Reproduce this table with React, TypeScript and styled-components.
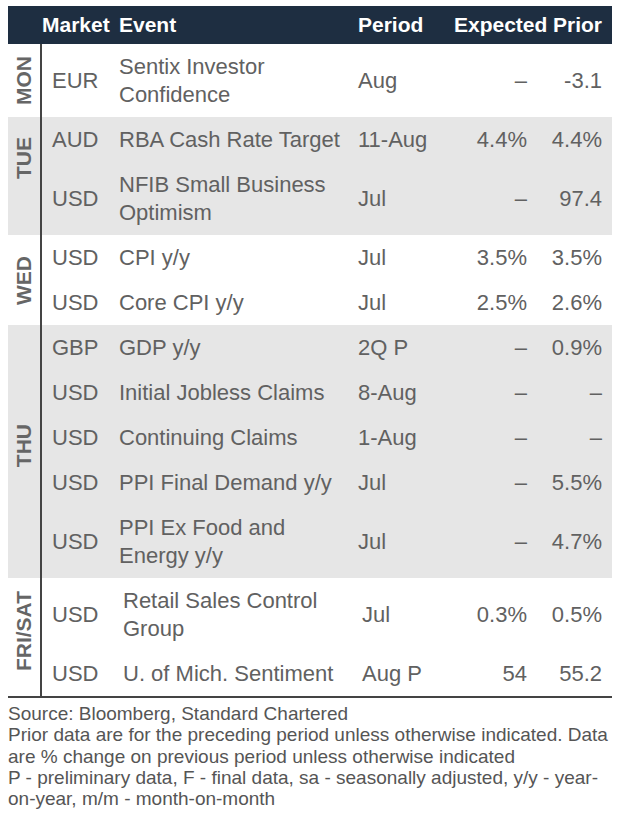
import styled, { createGlobalStyle } from "styled-components";

const GlobalStyle = createGlobalStyle`
  body {
    margin: 0;
    padding: 6px 8px;
    background: #ffffff;
    font-family: "Liberation Sans", Arial, sans-serif;
  }
`;

const Wrapper = styled.div`
  width: 604px;
`;

const Table = styled.div`
  border-bottom: 2px solid #444444;
`;

const HeaderRow = styled.div`
  display: grid;
  grid-template-columns: 34px 77px 239px 96px 83px 1fr;
  align-items: center;
  height: 38px;
  background: #1e2e41;
  color: #ffffff;
  font-size: 21px;
  font-weight: bold;
`;

const HeadCell = styled.div<{ $right?: boolean }>`
  text-align: ${(p) => (p.$right ? "right" : "left")};
  white-space: nowrap;
  &:last-child {
    padding-right: 10px;
  }
`;

const Group = styled.div<{ $shade?: boolean }>`
  display: flex;
  background: ${(p) => (p.$shade ? "#e6e6e6" : "#ffffff")};
`;

const DayCell = styled.div`
  flex: none;
  width: 32px;
  display: flex;
  align-items: center;
  justify-content: center;
  border-right: 2px solid #444444;
`;

const DayLabel = styled.span<{ $lift?: number }>`
  writing-mode: vertical-rl;
  transform: rotate(180deg);
  margin-bottom: ${(p) => p.$lift || 0}px;
  font-size: 21px;
  font-weight: bold;
  color: #666666;
  white-space: nowrap;
`;

const Rows = styled.div`
  flex: 1;
`;

const Row = styled.div`
  display: grid;
  grid-template-columns: 77px 239px 86px 83px 75px;
  align-items: center;
  padding: 8.5px 10px 8.5px 0;
  font-size: 22px;
  line-height: 28px;
  color: #616161;
`;

const Cell = styled.div<{ $right?: boolean; $inset?: number }>`
  text-align: ${(p) => (p.$right ? "right" : "left")};
  padding-left: ${(p) => p.$inset || 0}px;
  white-space: nowrap;
`;

const MarketCell = styled(Cell)`
  padding-left: 10px;
`;

const Footer = styled.div`
  padding-top: 5px;
  font-size: 19px;
  line-height: 21.3px;
  color: #555555;
`;

const FootLine = styled.div`
  white-space: nowrap;
`;

type Item = {
  market: string;
  event: string[];
  period: string;
  expected: string;
  prior: string;
};

type Day = {
  day: string;
  shade: boolean;
  lift?: number;
  inset?: number;
  items: Item[];
};

const D = "–";

const days: Day[] = [
  {
    day: "MON",
    shade: false,
    items: [
      { market: "EUR", event: ["Sentix Investor", "Confidence"], period: "Aug", expected: D, prior: "-3.1" },
    ],
  },
  {
    day: "TUE",
    shade: true,
    lift: 36,
    items: [
      { market: "AUD", event: ["RBA Cash Rate Target"], period: "11-Aug", expected: "4.4%", prior: "4.4%" },
      { market: "USD", event: ["NFIB Small Business", "Optimism"], period: "Jul", expected: D, prior: "97.4" },
    ],
  },
  {
    day: "WED",
    shade: false,
    items: [
      { market: "USD", event: ["CPI y/y"], period: "Jul", expected: "3.5%", prior: "3.5%" },
      { market: "USD", event: ["Core CPI y/y"], period: "Jul", expected: "2.5%", prior: "2.6%" },
    ],
  },
  {
    day: "THU",
    shade: true,
    lift: 12,
    items: [
      { market: "GBP", event: ["GDP y/y"], period: "2Q P", expected: D, prior: "0.9%" },
      { market: "USD", event: ["Initial Jobless Claims"], period: "8-Aug", expected: D, prior: D },
      { market: "USD", event: ["Continuing Claims"], period: "1-Aug", expected: D, prior: D },
      { market: "USD", event: ["PPI Final Demand y/y"], period: "Jul", expected: D, prior: "5.5%" },
      { market: "USD", event: ["PPI Ex Food and", "Energy y/y"], period: "Jul", expected: D, prior: "4.7%" },
    ],
  },
  {
    day: "FRI/SAT",
    shade: false,
    lift: 12,
    inset: 4,
    items: [
      { market: "USD", event: ["Retail Sales Control", "Group"], period: "Jul", expected: "0.3%", prior: "0.5%" },
      { market: "USD", event: ["U. of Mich. Sentiment"], period: "Aug P", expected: "54", prior: "55.2" },
    ],
  },
];

export default function App() {
  return (
    <Wrapper>
      <GlobalStyle />
      <Table>
        <HeaderRow>
          <span />
          <HeadCell>Market</HeadCell>
          <HeadCell>Event</HeadCell>
          <HeadCell>Period</HeadCell>
          <HeadCell $right>Expected</HeadCell>
          <HeadCell $right>Prior</HeadCell>
        </HeaderRow>
        {days.map((d) => (
          <Group key={d.day} $shade={d.shade}>
            <DayCell>
              <DayLabel $lift={d.lift}>{d.day}</DayLabel>
            </DayCell>
            <Rows>
              {d.items.map((it, i) => (
                <Row key={i}>
                  <MarketCell>{it.market}</MarketCell>
                  <Cell $inset={d.inset}>
                    {it.event.map((line) => (
                      <div key={line}>{line}</div>
                    ))}
                  </Cell>
                  <Cell $inset={d.inset}>{it.period}</Cell>
                  <Cell $right>{it.expected}</Cell>
                  <Cell $right>{it.prior}</Cell>
                </Row>
              ))}
            </Rows>
          </Group>
        ))}
      </Table>
      <Footer>
        <FootLine>Source: Bloomberg, Standard Chartered</FootLine>
        <FootLine>Prior data are for the preceding period unless otherwise indicated. Data</FootLine>
        <FootLine>are % change on previous period unless otherwise indicated</FootLine>
        <FootLine>P - preliminary data, F - final data, sa - seasonally adjusted, y/y - year-</FootLine>
        <FootLine>on-year, m/m - month-on-month</FootLine>
      </Footer>
    </Wrapper>
  );
}
